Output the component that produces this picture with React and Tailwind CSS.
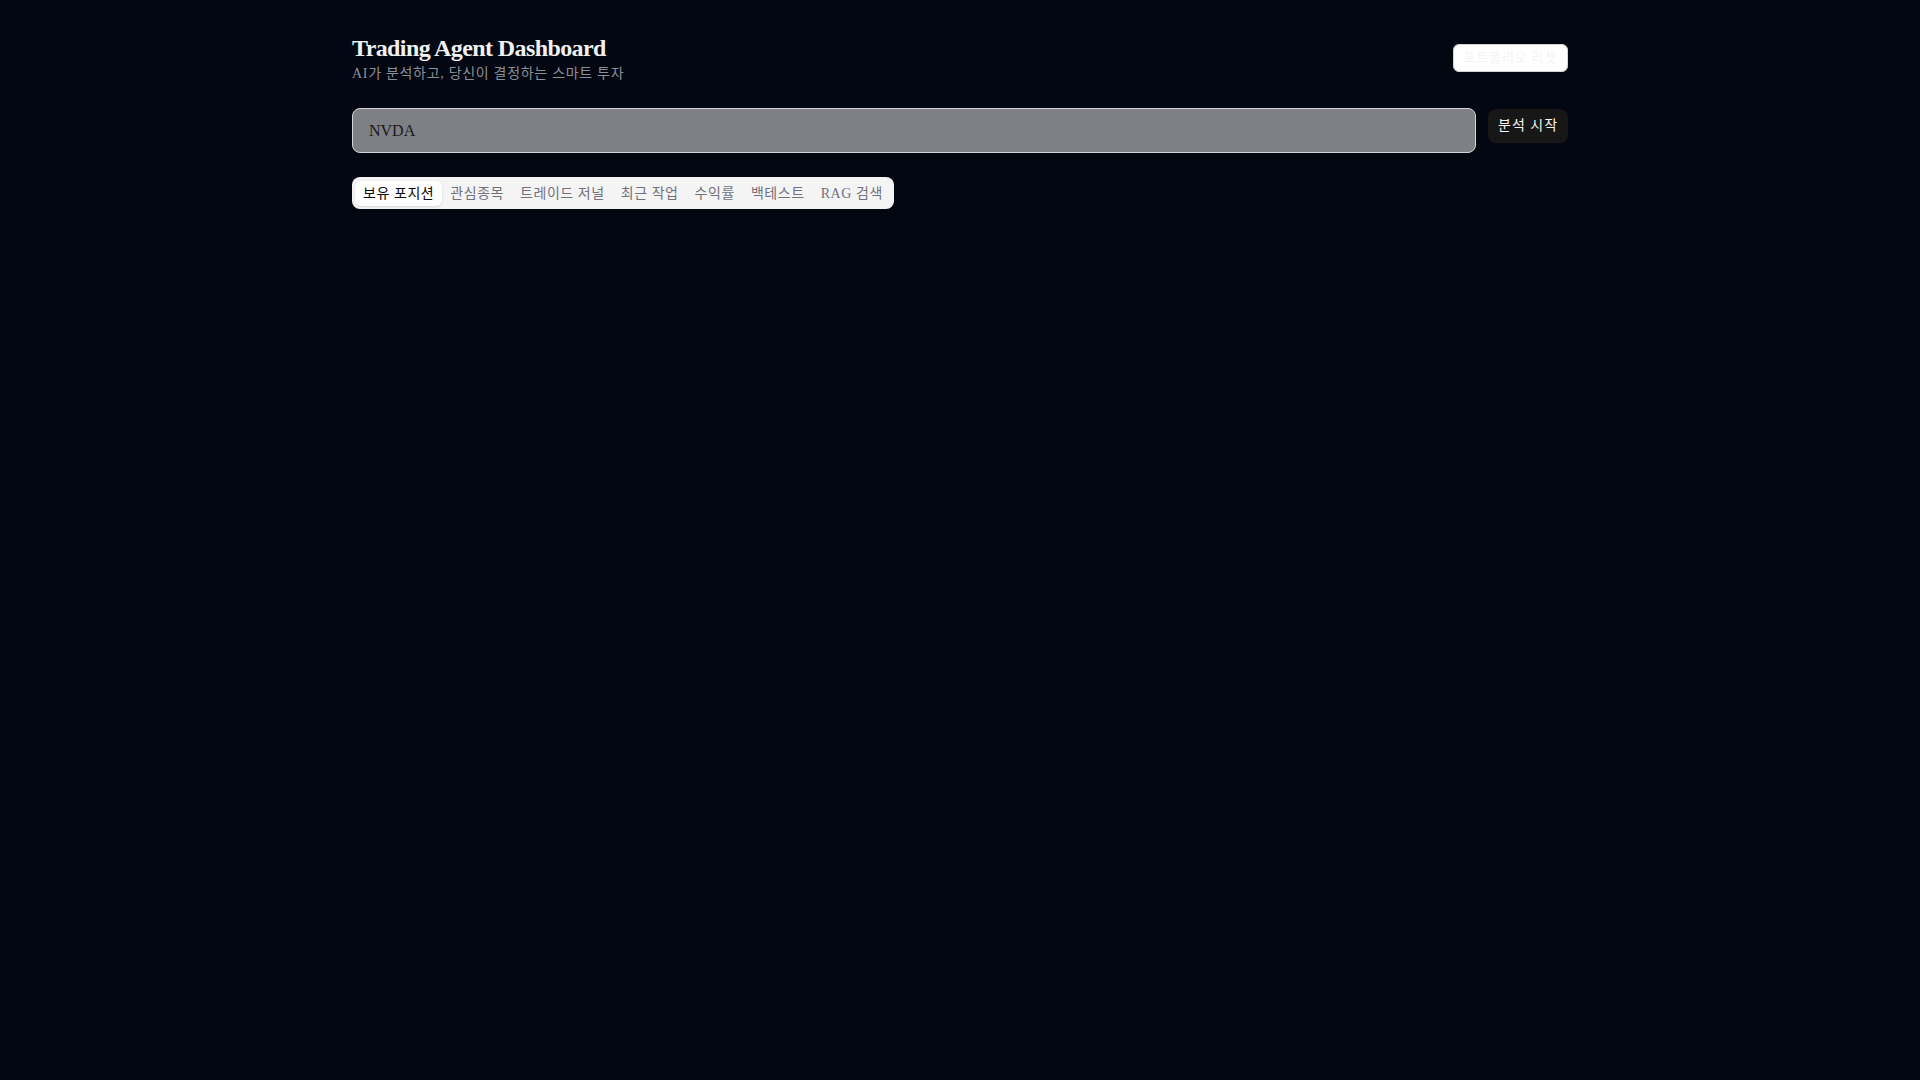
import React, { useState } from "react";

const tabs = [
  "보유 포지션",
  "관심종목",
  "트레이드 저널",
  "최근 작업",
  "수익률",
  "백테스트",
  "RAG 검색"
];

const App = () => {
  const [ticker, setTicker] = useState("NVDA");
  const [active, setActive] = useState(tabs[0]);

  return (
    <div className="min-h-screen bg-[#030712] text-[#f1f1f3] font-['Liberation_Serif','Noto_Sans_CJK_KR',serif]">
      <div className="mx-auto max-w-7xl px-8 pt-8">
        {/* Header */}
        <div className="flex items-center justify-between">
          <div>
            <h1 className="text-2xl leading-8 font-bold tracking-tight">Trading Agent Dashboard</h1>
            <p className="text-sm leading-5 tracking-[0.05em] text-[#8b8f98]">AI가 분석하고, 당신이 결정하는 스마트 투자</p>
          </div>
          <button className="h-7 px-[10px] rounded-md border border-[#d4d4d8] bg-white text-[13px] tracking-[0.06em] text-[#f4f4f5]">
            포트폴리오 리셋
          </button>
        </div>

        {/* Ticker input */}
        <div className="mt-6 flex items-start gap-3">
          <input
            value={ticker}
            onChange={(e) => setTicker(e.target.value)}
            className="flex-1 h-[45px] px-4 rounded-lg border border-[#d4d4d8] bg-[#7f8085] text-base text-[#18181b] outline-none"
          />
          <button className="mt-px h-[34px] px-2.5 rounded-lg bg-[#171717] text-sm tracking-[0.07em] text-[#f5f5f5]">
            분석 시작
          </button>
        </div>

        {/* Tabs */}
        <div className="mt-6 inline-flex h-[32px] items-center rounded-lg bg-[#f4f4f5] px-[3px]">
          {tabs.map((tab) => (
            <button
              key={tab}
              onClick={() => setActive(tab)}
              className={
                tab === active
                  ? "mt-px h-[25px] px-2 rounded-md bg-white text-sm leading-5 tracking-[0.04em] text-[#0a0a0a] shadow-sm"
                  : "mt-px h-[25px] px-2 rounded-md text-sm leading-5 tracking-[0.04em] text-[#71717a]"
              }
            >
              {tab}
            </button>
          ))}
        </div>
      </div>
    </div>
  );
};

export default App;
